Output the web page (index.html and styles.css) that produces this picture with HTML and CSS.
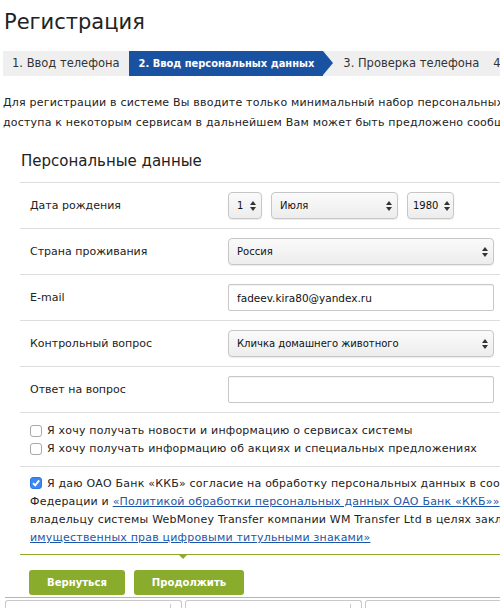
FILE: index.html
```html
<!DOCTYPE html>
<html lang="ru">
<head>
    <meta charset="UTF-8">
    <title>Регистрация</title>
    <link rel="stylesheet" href="styles.css">
</head>
<body>
<div class="page">
    <h1 class="title">Регистрация</h1>

    <div class="steps">
        <div class="step">1. Ввод телефона</div>
        <div class="step active">2. Ввод персональных данных</div>
        <div class="step">3. Проверка телефона</div>
        <div class="step last">4. Завершение</div>
    </div>

    <p class="intro">
        Для регистрации в системе Вы вводите только минимальный набор персональных данных. Для получения<br>
        доступа к некоторым сервисам в дальнейшем Вам может быть предложено сообщить дополнительные сведения.
    </p>

    <div class="panel">
        <h2 class="panel-title">Персональные данные</h2>

        <div class="row">
            <div class="label">Дата рождения</div>
            <div class="controls">
                <span class="select-wrap day">
                    <select><option>1</option></select>
                    <svg class="arrows" width="6" height="10" viewBox="0 0 6 10"><path d="M3 0 L6 4 H0 Z M0 6 H6 L3 10 Z" fill="#333"/></svg>
                </span>
                <span class="select-wrap month">
                    <select><option>Июля</option></select>
                    <svg class="arrows" width="6" height="10" viewBox="0 0 6 10"><path d="M3 0 L6 4 H0 Z M0 6 H6 L3 10 Z" fill="#333"/></svg>
                </span>
                <span class="select-wrap year">
                    <select><option>1980</option></select>
                    <svg class="arrows" width="6" height="10" viewBox="0 0 6 10"><path d="M3 0 L6 4 H0 Z M0 6 H6 L3 10 Z" fill="#333"/></svg>
                </span>
            </div>
        </div>

        <div class="row">
            <div class="label">Страна проживания</div>
            <div class="controls">
                <span class="select-wrap full">
                    <select><option>Россия</option></select>
                    <svg class="arrows" width="6" height="10" viewBox="0 0 6 10"><path d="M3 0 L6 4 H0 Z M0 6 H6 L3 10 Z" fill="#333"/></svg>
                </span>
            </div>
        </div>

        <div class="row">
            <div class="label">E-mail</div>
            <div class="controls">
                <input class="text-input" type="text" value="fadeev.kira80@yandex.ru">
            </div>
        </div>

        <div class="row">
            <div class="label">Контрольный вопрос</div>
            <div class="controls">
                <span class="select-wrap full">
                    <select><option>Кличка домашнего животного</option></select>
                    <svg class="arrows" width="6" height="10" viewBox="0 0 6 10"><path d="M3 0 L6 4 H0 Z M0 6 H6 L3 10 Z" fill="#333"/></svg>
                </span>
            </div>
        </div>

        <div class="row">
            <div class="label">Ответ на вопрос</div>
            <div class="controls">
                <input class="text-input" type="text" value="">
            </div>
        </div>

        <div class="options">
            <label class="check-line"><span class="check"></span>Я хочу получать новости и информацию о сервисах системы</label>
            <label class="check-line"><span class="check"></span>Я хочу получать информацию об акциях и специальных предложениях</label>
        </div>

        <div class="consent">
            <span class="check checked"><svg width="10" height="10" viewBox="0 0 10 10"><path d="M2 5.2 L4.2 7.4 L8.2 2.4" fill="none" stroke="#fff" stroke-width="1.8"/></svg></span>Я даю ОАО Банк «ККБ» согласие на обработку персональных данных в соответствии с законодательством Российской<br>
            Федерации и <a href="#">«Политикой обработки персональных данных ОАО Банк «ККБ»»</a> и их передачу<br>
            владельцу системы WebMoney Transfer компании WM Transfer Ltd в целях заключения «Соглашения о передаче<br>
            <a href="#">имущественных прав цифровыми титульными знаками»</a>
        </div>

        <div class="actions">
            <button class="btn">Вернуться</button>
            <button class="btn">Продолжить</button>
        </div>
    </div>

    <div class="footer-tabs">
        <div class="tab"><span></span></div>
        <div class="tab"><span></span></div>
        <div class="tab"><span></span></div>
    </div>
</div>
</body>
</html>
```

FILE: styles.css
```css
body {
    margin: 0;
    font-family: "DejaVu Sans", Verdana, sans-serif;
    color: #222;
    background: #fff;
    overflow: hidden;
}

.page {
    width: 900px;
    padding: 0 3px;
}

.title {
    margin: 0;
    padding: 9px 0 0 1px;
    font-size: 21px;
    font-weight: normal;
    line-height: 26px;
    color: #222;
}

.steps {
    display: flex;
    margin-top: 16px;
    height: 25px;
    background: #efefef;
    font-size: 11.5px;
    line-height: 25px;
}

.step {
    padding: 0 9px;
    color: #333;
}

.step.last {
    padding-left: 5px;
}

.step.active {
    position: relative;
    background: #1a52a2;
    color: #fff;
    font-family: "DejaVu Sans Condensed", "DejaVu Sans", sans-serif;
    font-weight: bold;
    font-size: 11px;
    padding: 0 9px 0 10px;
    margin-right: 11px;
}

.step.active:after {
    content: "";
    position: absolute;
    right: -10px;
    top: 0;
    border-top: 12.5px solid transparent;
    border-bottom: 12.5px solid transparent;
    border-left: 10px solid #1a52a2;
}

.intro {
    margin: 17px 0 0;
    font-size: 11px;
    letter-spacing: 0.2px;
    line-height: 20px;
    white-space: nowrap;
}

.panel {
    margin: 17px 0 0 17px;
}

.panel-title {
    margin: 0;
    padding: 0 0 10px 1px;
    font-size: 15px;
    font-weight: normal;
    line-height: 22px;
    border-bottom: 1px solid #ddd;
}

.row {
    display: flex;
    align-items: center;
    height: 45px;
    border-bottom: 1px solid #ddd;
}

.label {
    width: 198px;
    padding-left: 10px;
    font-size: 11px;
}

.controls {
    display: flex;
    align-items: center;
}

.select-wrap {
    position: relative;
    display: inline-block;
    margin-right: 9px;
}

.select-wrap select {
    -webkit-appearance: none;
    appearance: none;
    height: 27px;
    padding: 0 8px;
    border: 1px solid #c6c6c6;
    border-radius: 4px;
    background: linear-gradient(#fafafa, #ededed);
    font-family: "DejaVu Sans", Verdana, sans-serif;
    font-size: 10px;
    color: #111;
    box-shadow: 0 1px 1px rgba(0, 0, 0, 0.08);
}

.select-wrap .arrows {
    position: absolute;
    right: 6px;
    top: 9px;
}

.day select { width: 34px; }
.month select { width: 127px; }
.year select { width: 47px; padding-left: 5px; }
.year .arrows { right: 4px; }
.full { margin-right: 0; }
.full select { width: 266px; }

.text-input {
    width: 266px;
    height: 27px;
    box-sizing: border-box;
    padding: 0 8px;
    border: 1px solid #c8c8c8;
    border-radius: 2px;
    font-family: "DejaVu Sans", Verdana, sans-serif;
    font-size: 10.5px;
    color: #111;
    box-shadow: inset 0 1px 1px rgba(0, 0, 0, 0.06);
}

.options {
    padding: 9px 0 8px 10px;
    border-bottom: 1px solid #ddd;
    font-size: 11px;
    letter-spacing: 0.2px;
    line-height: 18px;
}

.check-line {
    display: flex;
    align-items: center;
}

.check {
    display: inline-flex;
    align-items: center;
    justify-content: center;
    width: 10px;
    height: 10px;
    margin-right: 5px;
    border: 1px solid #a9a9a9;
    border-radius: 3px;
    background: #fff;
    vertical-align: -1px;
}

.check.checked {
    background: #3b87f4;
    border-color: #2f77e0;
}

.consent {
    padding: 8px 0 7px 10px;
    font-size: 11px;
    letter-spacing: 0.2px;
    line-height: 18px;
    white-space: nowrap;
    border-bottom: 1px solid #8bac2c;
    position: relative;
}

.consent:after {
    content: "";
    position: absolute;
    left: 158px;
    bottom: -5px;
    border-left: 5px solid transparent;
    border-right: 5px solid transparent;
    border-top: 5px solid #8bac2c;
}

.consent a {
    color: #1d56a8;
    text-decoration: underline;
}

.actions {
    display: flex;
    gap: 9px;
    padding: 15px 0 0 9px;
}

.btn {
    height: 25px;
    padding: 0 18px;
    border: none;
    border-radius: 3px;
    background: #8aac2d;
    color: #fff;
    font-family: "DejaVu Sans Condensed", "DejaVu Sans", sans-serif;
    font-size: 11.2px;
    font-weight: bold;
}

.footer-tabs {
    display: flex;
    gap: 3px;
    margin: 2px 0 0 2px;
    padding-top: 2px;
    border-top: 1px solid #b5b5b5;
}

.tab {
    width: 175px;
    height: 12px;
    border: 1px solid #c9c9c9;
    border-bottom: none;
    border-radius: 3px 3px 0 0;
    position: relative;
}

.tab span {
    position: absolute;
    right: 10px;
    top: 3px;
    height: 10px;
    border-left: 1px solid #ccc;
}
```
